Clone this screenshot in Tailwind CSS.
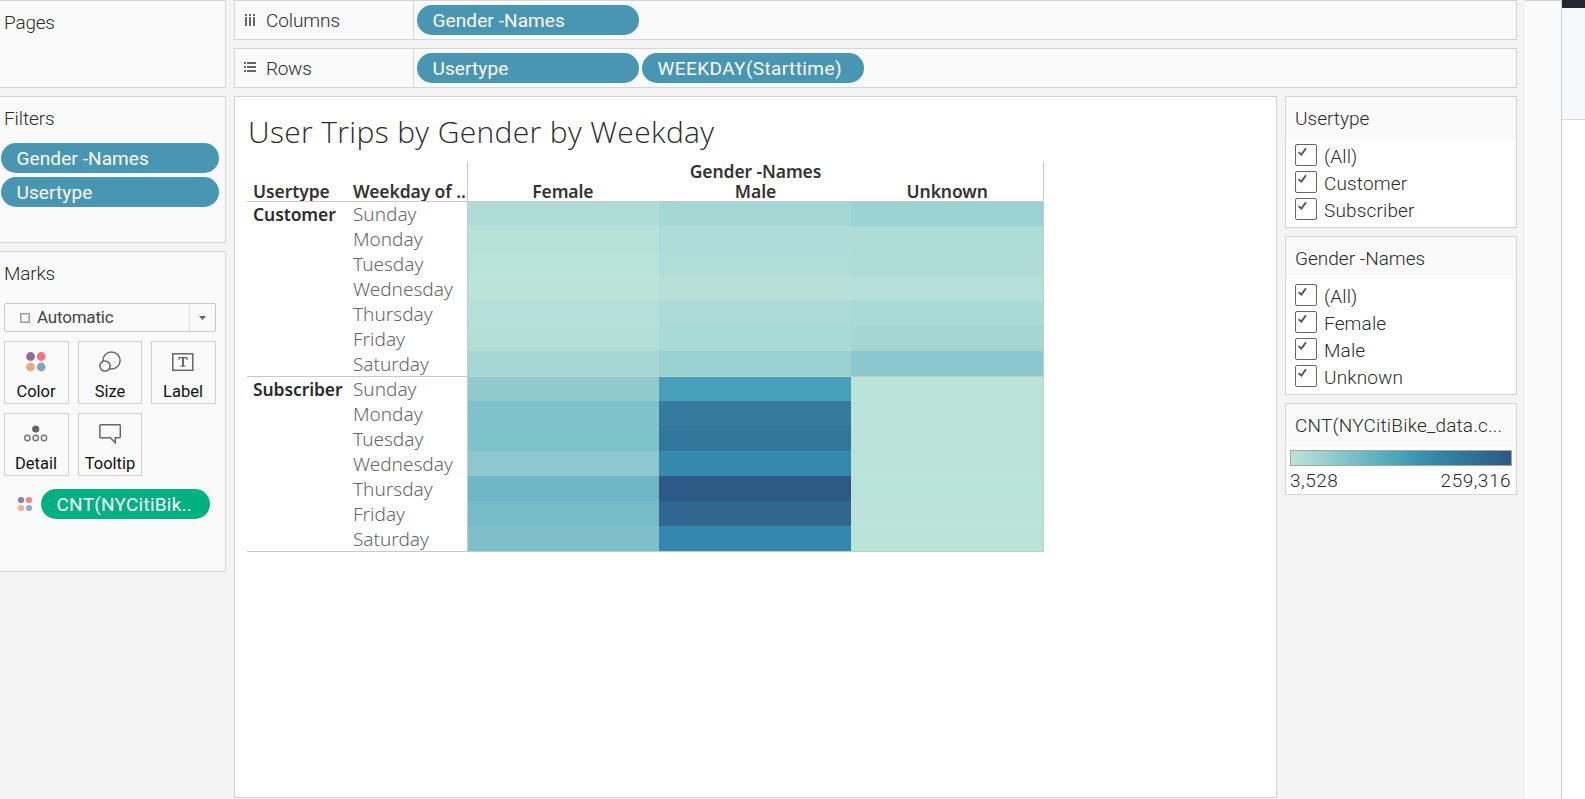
<!DOCTYPE html>
<html lang="en">
<head>
<meta charset="utf-8">
<title>User Trips by Gender by Weekday</title>
<script src="https://cdn.jsdelivr.net/npm/@tailwindcss/browser@4"></script>
</head>
<body class="flex h-[799px] w-[1585px] overflow-hidden bg-[#f4f4f4] font-[Roboto,sans-serif] text-[19px] font-light leading-5 text-[#2b2b2b]">

<!-- Left shelf column -->
<aside class="flex w-[226px] shrink-0 flex-col gap-2">
  <section class="h-[88px] border border-l-0 border-[#d4d4d4] bg-[#fafafa] pt-3 pl-1"><h2 class="tracking-[-0.2px]">Pages</h2></section>
  <section class="h-[147px] border border-l-0 border-[#d4d4d4] bg-[#fafafa] pt-3">
    <h2 class="pl-1 tracking-[-0.1px]">Filters</h2>
    <div class="mt-[14px] ml-px flex w-[218px] flex-col gap-1 font-[450] tracking-[0.1px] text-white">
      <div class="h-[30px] rounded-full bg-[#4996b2] pl-[15.500px] leading-[31px]">Gender -Names</div>
      <div class="h-[30px] rounded-full bg-[#4996b2] pl-[15.500px] leading-[31px]">Usertype</div>
    </div>
  </section>
  <section class="h-[321px] border border-l-0 border-[#d4d4d4] bg-[#fafafa] pt-3">
    <h2 class="pl-1 tracking-[-0.2px]">Marks</h2>
    <div class="mt-[19px] ml-1 flex h-[29px] w-[212px] items-center rounded-xs border border-[#c8c8c8] text-[17px]">
      <span class="ml-[15px] size-[10px] border border-[#999] bg-[#f4f4f4] ring-1 ring-[#ccc] ring-inset"></span>
      <span class="-mt-px ml-[7px] flex-1 font-normal tracking-[-0.2px] text-[#444]">Automatic</span>
      <span class="flex h-full w-[26px] items-center justify-center border-l border-[#e0e0e0]">
        <svg class="mt-px h-1 w-[7px]" viewBox="0 0 7 4"><path d="M0 0h7L3.500 4z" fill="#666"/></svg>
      </span>
    </div>
    <div class="mt-[9px] ml-1 grid w-[212px] grid-cols-[65px_64px_65px] gap-x-[9px] gap-y-[9px] text-center text-[16.500px] font-normal text-[#111]">
      <div class="flex h-[63px] flex-col items-center border border-[#d0d0d0] pr-px">
        <svg class="mt-2 h-6 w-8" viewBox="0 0 32 24"><circle cx="10.500" cy="6.500" r="4.400" fill="#857299"/><circle cx="21.200" cy="6.500" r="4.400" fill="#f96f80"/><circle cx="10.500" cy="17" r="4.400" fill="#f1a77f"/><circle cx="21.200" cy="17" r="4.400" fill="#80a3ca"/></svg>
        <span class="mt-[8px]">Color</span>
      </div>
      <div class="flex h-[63px] flex-col items-center border border-[#d0d0d0]">
        <svg class="mt-2 h-6 w-8" viewBox="0 0 32 24" fill="#fafafa" stroke="#666" stroke-width="1.500"><circle cx="17.500" cy="10.500" r="8.600"/><circle cx="11" cy="16" r="5.100"/></svg>
        <span class="mt-[8px]">Size</span>
      </div>
      <div class="flex h-[63px] flex-col items-center border border-[#d0d0d0] pr-px">
        <svg class="mt-2 h-6 w-8" viewBox="0 0 32 24"><rect x="5.800" y="3.800" width="20" height="16.500" fill="none" stroke="#666" stroke-width="1.500"/><path d="M11.500 7h9v3h-1l-.3-1.700H17V15.500l1.500.3v.9h-5v-.9l1.500-.3V8.300h-2.200L12.500 10h-1z" fill="#666"/></svg>
        <span class="mt-[8px]">Label</span>
      </div>
      <div class="flex h-[63px] flex-col items-center border border-[#d0d0d0] pr-px">
        <svg class="mt-2 h-6 w-8" viewBox="0 0 32 24" fill="none" stroke="#777" stroke-width="1.400"><circle cx="15.700" cy="7" r="3.600" fill="#666" stroke="none"/><circle cx="7.400" cy="16" r="2.700"/><circle cx="15.700" cy="16" r="2.700"/><circle cx="24" cy="16" r="2.700"/></svg>
        <span class="mt-[8px]">Detail</span>
      </div>
      <div class="flex h-[63px] flex-col items-center border border-[#d0d0d0]">
        <svg class="mt-2 h-6 w-8" viewBox="0 0 32 24"><path d="M6.800 2.800h18.500q1 0 1 1v11q0 1-1 1h-4v5l-5-5H6.800q-1 0-1-1v-11q0-1 1-1z" fill="none" stroke="#666" stroke-width="1.500"/></svg>
        <span class="mt-[8px]">Tooltip</span>
      </div>
    </div>
    <div class="mt-[13px] flex items-center pl-[17px]">
      <svg class="size-4" viewBox="0 0 16 16"><circle cx="4" cy="4" r="3.100" fill="#907da5"/><circle cx="12" cy="4" r="3.100" fill="#fa8190"/><circle cx="4" cy="12" r="3.100" fill="#f4b18c"/><circle cx="12" cy="12" r="3.100" fill="#90afd2"/></svg>
      <div class="ml-2 h-[30px] w-[169px] rounded-full bg-[#00b180] pl-[15.500px] leading-[31px] font-[450] tracking-[0.250px] text-white">CNT(NYCitiBik..</div>
    </div>
  </section>
</aside>

<!-- Worksheet -->
<main class="ml-2 flex w-[1283px] shrink-0 flex-col gap-2">
  <div class="flex h-10 shrink-0 items-center border border-[#d4d4d4] bg-[#fafafa]">
    <div class="flex h-full w-[179px] items-center border-r border-[#d4d4d4] pl-[10px]">
      <svg class="h-3 w-[10px]" viewBox="0 0 10 12" fill="#666"><path d="M0 0h2v2H0zM4 0h2v2H4zM8 0h2v2H8zM0 3h2v9H0zM4 3h2v9H4zM8 3h2v9H8z"/></svg>
      <span class="mt-0.5 ml-[11px] tracking-[-0.1px]">Columns</span>
    </div>
    <div class="ml-[3px] h-[30px] w-[222px] rounded-full bg-[#4996b2] pl-[15.500px] leading-[31px] font-[450] tracking-[0.1px] text-white">Gender -Names</div>
  </div>
  <div class="flex h-10 shrink-0 items-center border border-[#d4d4d4] bg-[#fafafa]">
    <div class="flex h-full w-[179px] items-center border-r border-[#d4d4d4] pl-[9px]">
      <svg class="-mt-0.5 h-[10px] w-3" viewBox="0 0 12 10" fill="#666"><path d="M0 0h2v2H0zM3 0h9v2H3zM0 4h2v2H0zM3 4h9v2H3zM0 8h2v2H0zM3 8h9v2H3z"/></svg>
      <span class="mt-0.5 ml-[10px] tracking-[-0.3px]">Rows</span>
    </div>
    <div class="ml-[3px] h-[30px] w-[222px] rounded-full bg-[#4996b2] pl-[15.500px] leading-[31px] font-[450] tracking-[0.1px] text-white">Usertype</div>
    <div class="ml-[3px] h-[30px] w-[222px] rounded-full bg-[#4996b2] pl-[15.500px] leading-[31px] font-[450] tracking-[0.400px] text-white">WEEKDAY(Starttime)</div>
  </div>

  <div class="flex gap-2">
    <!-- Heat map view -->
    <section class="h-[702px] w-[1043px] border border-[#d0d0d0] bg-white pl-3 font-['Noto_Sans',sans-serif]">
      <h1 class="h-16 pl-px font-['Open_Sans',sans-serif] text-[30px] leading-[69px] font-light tracking-[0.350px] whitespace-nowrap">User Trips by Gender by Weekday</h1>
      <div class="w-[797px] border-b border-[#c9c9c9]">
        <div class="flex h-10 text-[17.500px] font-[570] tracking-[-0.1px] whitespace-nowrap text-[#333]">
          <div class="flex w-[221px] items-end border-r border-[#c9c9c9] pl-1.5">
            <span class="w-[100px]">Usertype</span><span>Weekday of ..</span>
          </div>
          <div class="w-[576px] border-r border-[#c9c9c9] text-center">
            <div>Gender -Names</div>
            <div class="grid grid-cols-3"><span class="-ml-0.5">Female</span><span>Male</span><span>Unknown</span></div>
          </div>
        </div>
        <div id="groups"></div>
      </div>
    </section>

    <!-- Filter and legend cards -->
    <aside class="flex w-[232px] flex-col gap-2">
      <section class="h-[132px] border border-[#d4d4d4] bg-white">
        <h2 class="h-[42px] bg-[#fafafa] pl-[9px] leading-[43px]">Usertype</h2>
        <ul class="filter flex flex-col gap-[5px] pt-[5px] pl-[9px] tracking-[0.150px]" data-items="(All)|Customer|Subscriber"></ul>
      </section>
      <section class="h-[159px] border border-[#d4d4d4] bg-white">
        <h2 class="h-[42px] bg-[#fafafa] pl-[9px] leading-[43px]">Gender -Names</h2>
        <ul class="filter flex flex-col gap-[5px] pt-[5px] pl-[9px] tracking-[0.150px]" data-items="(All)|Female|Male|Unknown"></ul>
      </section>
      <section class="h-[92px] border border-[#d4d4d4] bg-white">
        <h2 class="h-[42px] bg-[#fafafa] pl-[9px] leading-[43px] tracking-[0.200px]">CNT(NYCitiBike_data.c...</h2>
        <div class="mx-1 mt-1 h-4 border border-[#a9a595] bg-[linear-gradient(90deg,#bce4d8_0%,#81c4cb_25%,#45a2b9_50%,#348aab_64%,#2c5985_100%)]"></div>
        <div class="flex justify-between pt-[5px] pr-[5px] pl-1 tracking-[0.500px]"><span>3,528</span><span>259,316</span></div>
      </section>
    </aside>
  </div>
</main>

<!-- Neighbouring pane strip -->
<div class="ml-2 w-[37px] shrink-0 border-t border-r border-[#d0d0d0] bg-[#fafafa]"></div>
<div class="w-[23px] shrink-0 bg-white">
  <div class="h-2 bg-[#24292f]"></div>
  <div class="h-[112px] border-b border-[#d8dce1] bg-[#f6f8fa]"></div>
</div>

<script>
const days = ['Sunday','Monday','Tuesday','Wednesday','Thursday','Friday','Saturday'];
const data = {
  Customer: [
    ['#afdcd7','#a5d8d4','#9cd3d2'],
    ['#b6e2d8','#afdcd8','#aedcd7'],
    ['#b7e3d8','#b1ddd9','#b0dcd8'],
    ['#bae4d8','#b6e0d8','#b5e0d9'],
    ['#b5e0d9','#addad6','#a9dad5'],
    ['#b4dfd7','#a9dad5','#a4d7d3'],
    ['#a5d8d4','#9ad1d1','#8bc8cd']],
  Subscriber: [
    ['#90cacf','#48a1bb','#bbe4d9'],
    ['#80c2cb','#347b9f','#bae4d8'],
    ['#7ec2ca','#31779c','#bae4d8'],
    ['#8dc8cf','#358aab','#bbe4d9'],
    ['#6fb7c6','#2c5985','#b8e3d7'],
    ['#78bbc8','#30668f','#b9e3d8'],
    ['#7ebfca','#3487ae','#bae4d8']]
};
document.getElementById('groups').innerHTML = Object.entries(data).map(([name, rows]) => `
  <div class="relative flex h-[175px]">
    <div class="w-[106px] pl-1.5 text-[17.500px] leading-[26px] font-[650] tracking-[-0.1px]">${name}</div>
    <div class="w-[115px] border-r border-[#c9c9c9] text-[#666]">${days.map(d => `<div class="h-[25px] leading-[26px]">${d}</div>`).join('')}</div>
    <div class="w-[576px] border-r border-[#c9c9c9]">${rows.map(r => `<div class="grid h-[25px] grid-cols-[191px_192px_192px]">${r.map(c => `<div style="background:${c}"></div>`).join('')}</div>`).join('')}</div>
    <div class="absolute inset-x-0 top-0 h-px bg-[#c9c9c9]"></div>
  </div>`).join('');
document.querySelectorAll('.filter').forEach(ul => {
  ul.innerHTML = ul.dataset.items.split('|').map(t => `
  <li class="flex h-[22px] items-center">
    <svg class="size-[22px]" viewBox="0 0 22 22"><rect x=".5" y=".5" width="21" height="21" rx="1.500" fill="#fff" stroke="#666"/><path d="M3.600 8.200L6.400 10.600L11 4.200" fill="none" stroke="#555" stroke-width="1.900"/></svg>
    <span class="mt-[3px] ml-[7px]">${t}</span>
  </li>`).join('');
});
</script>
</body>
</html>
